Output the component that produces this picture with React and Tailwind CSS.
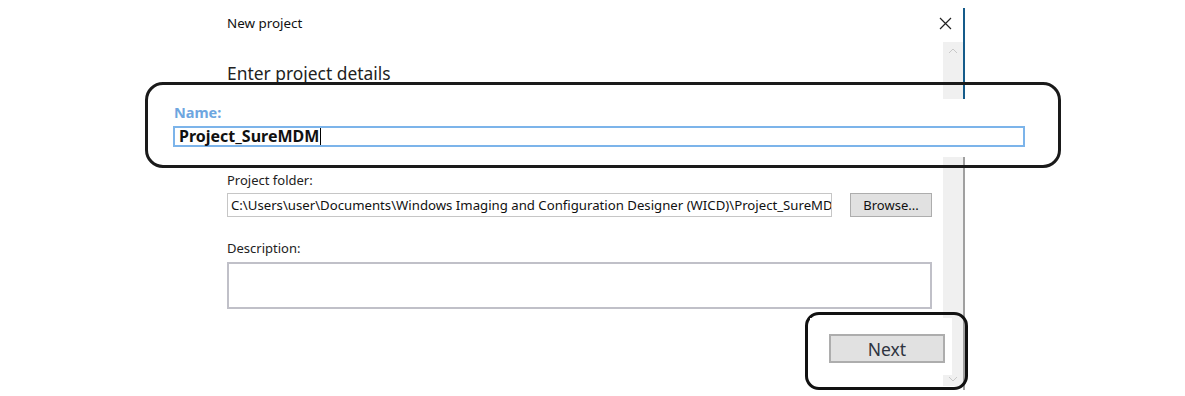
import React from "react";

export default function App() {
  return (
    <div className="relative w-[1185px] h-[396px] overflow-hidden bg-white font-['Noto_Sans','Open_Sans',sans-serif] text-black">
      <div className="flex pl-[227px]">
        {/* content column */}
        <div className="w-[716px] shrink-0 flex flex-col">
          <div className="pt-[14px] w-[725px] flex items-center justify-between">
            <span className="text-[13.4px] leading-[18px] text-[#111]">New project</span>
            <svg width="13" height="13" viewBox="0 0 13 13">
              <path d="M1 1 L12 12 M12 1 L1 12" stroke="#222" strokeWidth="1.2" fill="none" />
            </svg>
          </div>
          <div className="mt-[29px] text-[17.4px] leading-[24px] text-[#222]">Enter project details</div>

          {/* Name section (enlarged) */}
          <div className="relative z-10 mt-[14px] -ml-[54px] w-[852px] bg-white pt-[4px] pb-[10px] flex flex-col gap-[5px]">
            <span className="pl-[1px] text-[14.5px] leading-[18px] font-bold text-[#6ea6e0]">Name:</span>
            <div className="h-[21px] border-2 border-[#7cb4ea] flex items-center pl-[4px]">
              <span className="text-[16px] leading-[17px] font-bold text-[#111] border-r border-black pr-[1px]">Project_SureMDM</span>
            </div>
          </div>

          <div className="mt-[15px] text-[13px] leading-[16px] text-[#222]">Project folder:</div>
          <div className="mt-[5px] flex items-center">
            <div className="w-[605px] h-[24px] border border-[#c6c6c6] flex items-center pl-[3px] overflow-hidden">
              <span className="whitespace-nowrap text-[13.2px] leading-[16px] text-[#111]">
                C:\Users\user\Documents\Windows Imaging and Configuration Designer (WICD)\Project_SureMDM
              </span>
            </div>
            <button className="ml-[18px] w-[82px] h-[24px] bg-[#e1e1e1] border border-[#adadad] text-[13px] leading-[16px] text-[#111]">
              Browse...
            </button>
          </div>

          <div className="mt-[23px] text-[13px] leading-[16px] text-[#222]">Description:</div>
          <div className="mt-[6px] w-[705px] h-[47px] border-2 border-[#c0c0c8] bg-white"></div>

          {/* Next section (enlarged) */}
          <div className="relative z-10 mt-[9px] ml-[583px] w-[142px] bg-white pt-[16px] pb-[12px] pl-[19px]">
            <button className="w-[116px] h-[29px] bg-[#e1e1e1] border-2 border-[#adadad] text-[17.5px] leading-[22px] text-[#2e3440]">
              Next
            </button>
          </div>
        </div>

        {/* scrollbar */}
        <div className="mt-[42px] h-[344px] w-[20px] shrink-0 bg-[#f0f0f0] flex flex-col items-center justify-between pt-[6px] pb-[4px]">
          <svg width="10" height="6" viewBox="0 0 10 6">
            <path d="M1 5 L5 1 L9 5" stroke="#c8c8c8" strokeWidth="1" fill="none" />
          </svg>
          <svg width="10" height="6" viewBox="0 0 10 6">
            <path d="M1 1 L5 5 L9 1" stroke="#c8c8c8" strokeWidth="1" fill="none" />
          </svg>
        </div>

        {/* right border line */}
        <div className="w-[2px] shrink-0 flex flex-col">
          <div className="mt-[8px] h-[91px] bg-[#155b8a]"></div>
          <div className="h-[58px]"></div>
          <div className="h-[233px] bg-[#a0a0a0]"></div>
        </div>
      </div>

      {/* callout annotations */}
      <div className="absolute left-[145px] top-[82px] w-[916px] h-[86px] border-[3px] border-[#1a1a1a] rounded-[18px]"></div>
      <div className="absolute left-[805px] top-[312px] w-[163px] h-[78px] border-[3px] border-[#111] rounded-[14px]"></div>
    </div>
  );
}
